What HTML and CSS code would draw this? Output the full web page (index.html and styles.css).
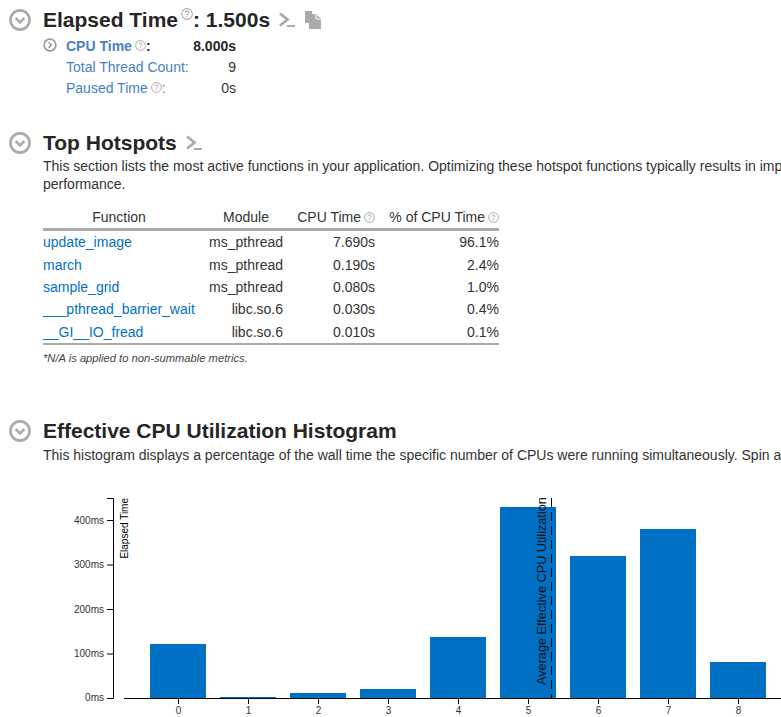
FILE: index.html
```html
<!DOCTYPE html>
<html lang="en">
<head>
  <meta charset="UTF-8" />
  <title>Summary</title>
  <link rel="stylesheet" href="styles.css">
</head>
<body>
  <svg class="defs" width="0" height="0">
    <symbol id="chevron-circle" viewBox="0 0 22 22">
      <circle cx="11" cy="11" r="9.6" fill="none" stroke="#aaa" stroke-width="2.6"/>
      <path d="M6.6 9 L11 13.4 L15.4 9" fill="none" stroke="#aaa" stroke-width="2.6"/>
    </symbol>
    <symbol id="chevron-right" viewBox="0 0 14 14">
      <circle cx="7" cy="7" r="5.9" fill="none" stroke="#999" stroke-width="1.6"/>
      <path d="M5.6 4.2 L8.4 7 L5.6 9.8" fill="none" stroke="#999" stroke-width="1.6"/>
    </symbol>
    <symbol id="terminal" viewBox="0 0 16 16">
      <path d="M1 1.5 L8.5 7.5 L1 13.5" fill="none" stroke="#aaa" stroke-width="2.8"/>
      <rect x="8" y="13" width="8" height="2" fill="#aaa"/>
    </symbol>
    <symbol id="copy" viewBox="0 0 17 18">
      <path d="M0 0 H7 V12 H0 Z M4 3 H11 L16 8 V18 H4 Z" fill="#aaa"/>
      <path d="M11 3 V8 H16" fill="none" stroke="#fff" stroke-width="1"/>
    </symbol>
    <symbol id="help" viewBox="0 0 11 11">
      <circle cx="5.5" cy="5.5" r="4.9" fill="none" stroke="#aaa" stroke-width="1"/>
      <path d="M3.9 4.3 C3.9 2.4 7.1 2.4 7.1 4.2 C7.1 5.3 5.5 5.3 5.5 6.6" fill="none" stroke="#aaa" stroke-width="1"/>
      <rect x="5" y="7.4" width="1" height="1" fill="#aaa"/>
    </symbol>
  </svg>

  <section class="section section-elapsed">
    <h2 class="title">
      <svg class="toggle"><use href="#chevron-circle"/></svg>
      <span>Elapsed Time</span><svg class="help help-raised"><use href="#help"/></svg><span>: 1.500s</span>
      <svg class="cmd"><use href="#terminal"/></svg>
      <svg class="copy"><use href="#copy"/></svg>
    </h2>
    <div class="metrics">
      <div class="metric metric-main">
        <svg class="sub-toggle"><use href="#chevron-right"/></svg>
        <span class="metric-name"><b class="link">CPU Time</b><svg class="help"><use href="#help"/></svg><b>:</b></span>
        <b class="metric-value">8.000s</b>
      </div>
      <div class="metric">
        <span class="metric-name link">Total Thread Count:</span>
        <span class="metric-value">9</span>
      </div>
      <div class="metric">
        <span class="metric-name"><span class="link">Paused Time</span><svg class="help"><use href="#help"/></svg><span class="link">:</span></span>
        <span class="metric-value">0s</span>
      </div>
    </div>
  </section>

  <section class="section section-hotspots">
    <h2 class="title">
      <svg class="toggle"><use href="#chevron-circle"/></svg>
      <span>Top Hotspots</span>
      <svg class="cmd"><use href="#terminal"/></svg>
    </h2>
    <p class="desc">This section lists the most active functions in your application. Optimizing these hotspot functions typically results in improving overall application performance.</p>
    <table class="hotspots">
      <thead>
        <tr>
          <th class="col-fn">Function</th>
          <th class="col-mod">Module</th>
          <th class="col-time">CPU Time<svg class="help"><use href="#help"/></svg></th>
          <th class="col-pct">% of CPU Time<svg class="help"><use href="#help"/></svg></th>
        </tr>
      </thead>
      <tbody>
        <tr><td><a class="fn">update_image</a></td><td>ms_pthread</td><td>7.690s</td><td>96.1%</td></tr>
        <tr><td><a class="fn">march</a></td><td>ms_pthread</td><td>0.190s</td><td>2.4%</td></tr>
        <tr><td><a class="fn">sample_grid</a></td><td>ms_pthread</td><td>0.080s</td><td>1.0%</td></tr>
        <tr><td><a class="fn">___pthread_barrier_wait</a></td><td>libc.so.6</td><td>0.030s</td><td>0.4%</td></tr>
        <tr><td><a class="fn">__GI__IO_fread</a></td><td>libc.so.6</td><td>0.010s</td><td>0.1%</td></tr>
      </tbody>
    </table>
    <p class="note">*N/A is applied to non-summable metrics.</p>
  </section>

  <section class="section section-histogram">
    <h2 class="title">
      <svg class="toggle"><use href="#chevron-circle"/></svg>
      <span>Effective CPU Utilization Histogram</span>
    </h2>
    <p class="desc">This histogram displays a percentage of the wall time the specific number of CPUs were running simultaneously. Spin and Overhead time adds to the Idle CPU utilization value.</p>

    <!-- chart origin is page x=0, y=490 -->
    <svg class="chart" width="781" height="227" viewBox="0 490 781 227">
      <g fill="#0070c5">
        <rect x="150" y="644" width="56" height="54"/>
        <rect x="220" y="697" width="56" height="1"/>
        <rect x="290" y="693" width="56" height="5"/>
        <rect x="360" y="689" width="56" height="9"/>
        <rect x="430" y="637" width="56" height="61"/>
        <rect x="500" y="507" width="56" height="191"/>
        <rect x="570" y="556" width="56" height="142"/>
        <rect x="640" y="529" width="56" height="169"/>
        <rect x="710" y="662" width="56" height="36"/>
      </g>

      <path class="axis" d="M107 498.5 H113.5 V698.5 H107 M107 520.5 H113 M107 565 H113 M107 609.5 H113 M107 654 H113"/>
      <path class="axis" d="M124 698.5 H781 M178.5 698 V704 M248.5 698 V704 M318.5 698 V704 M388.5 698 V704 M458.5 698 V704 M528.5 698 V704 M598.5 698 V704 M668.5 698 V704 M738.5 698 V704"/>

      <g class="tick tick-y">
        <text x="104" y="524">400ms</text>
        <text x="104" y="568">300ms</text>
        <text x="104" y="613">200ms</text>
        <text x="104" y="657">100ms</text>
        <text x="104" y="701">0ms</text>
      </g>
      <g class="tick tick-x">
        <text x="178.5" y="714">0</text>
        <text x="248.5" y="714">1</text>
        <text x="318.5" y="714">2</text>
        <text x="388.5" y="714">3</text>
        <text x="458.5" y="714">4</text>
        <text x="528.5" y="714">5</text>
        <text x="598.5" y="714">6</text>
        <text x="668.5" y="714">7</text>
        <text x="738.5" y="714">8</text>
      </g>

      <text class="y-title" transform="translate(127.5 498) rotate(-90)" text-anchor="end">Elapsed Time</text>
      <path class="avg-line" d="M551.5 498 V698"/>
      <text class="avg-title" transform="translate(545.5 685) rotate(-90)">Average Effective CPU Utilization</text>
    </svg>
  </section>
</body>
</html>
```

FILE: styles.css
```css
html, body {
  margin: 0;
  height: 717px;
  overflow: hidden;
}
body {
  font-family: "Liberation Sans", Arial, sans-serif;
  font-size: 14px;
  color: #333;
  background: white;
  width: 781px;
}
.defs {
  display: block;
  height: 0;
}
.section {
  white-space: nowrap;
}
.section-elapsed {
  padding-top: 8px;
  height: 90px;
}
.section-hotspots {
  padding-top: 33px;
  height: 259px;
}
.section-histogram {
  padding-top: 29px;
}
.title {
  display: flex;
  align-items: center;
  margin: 0 0 0 9px;
  height: 24px;
  font-size: 21px;
  font-weight: bold;
  color: #262626;
}
.toggle {
  width: 22px;
  height: 22px;
  margin-right: 12px;
  flex: none;
}
.help {
  width: 11px;
  height: 11px;
  flex: none;
  margin-left: 3px;
}
.help-raised {
  margin: -12px 0 0 3px;
  width: 12px;
  height: 12px;
}
.cmd {
  width: 16px;
  height: 16px;
  margin-left: 9px;
}
.copy {
  width: 17px;
  height: 18px;
  margin-left: 10px;
}
.metrics {
  margin: 3px 0 0 43px;
}
.metric {
  display: flex;
  align-items: center;
  height: 21px;
  padding-left: 23px;
  position: relative;
}
.sub-toggle {
  position: absolute;
  left: 0;
  top: 3px;
  width: 14px;
  height: 14px;
}
.metric-name {
  width: 122px;
  display: flex;
  align-items: center;
}
.metric-value {
  width: 48px;
  text-align: right;
}
.metric-main b {
  color: #262626;
}
.metric .link, .metric-main b.link {
  color: #4a80c4;
}
.desc {
  margin: 2px 0 0 43px;
  line-height: 18px;
  width: 950px;
  white-space: normal;
  color: #333;
}
.section-histogram .desc {
  margin-top: 3px;
  white-space: nowrap;
}
.hotspots {
  border-collapse: collapse;
  margin: 12px 0 0 43px;
  width: 456px;
  table-layout: fixed;
}
.hotspots th {
  font-weight: normal;
  height: 23px;
  padding: 0;
  text-align: right;
  border-bottom: 3px solid #aaa;
}
.hotspots th.col-fn {
  width: 152px;
  text-align: center;
}
.hotspots th.col-mod {
  width: 74px;
  padding-right: 14px;
}
.col-time { width: 92px; }
.hotspots th .help {
  margin-left: 3px;
  vertical-align: -1px;
}
.hotspots td {
  padding: 0;
  height: 22.4px;
  text-align: right;
}
.hotspots td:first-child {
  text-align: left;
}
.hotspots tbody tr:last-child td {
  border-bottom: 2px solid #aaa;
}
.fn {
  color: #0071c5;
}
.note {
  margin: 7px 0 0 43px;
  font-size: 11.2px;
  font-style: italic;
  color: #444;
}
.chart {
  display: block;
  margin-top: 26px;
}
.axis {
  fill: none;
  stroke: #000;
  stroke-width: 1;
}
.tick text {
  font-size: 10px;
  fill: #333;
}
.tick-y text {
  text-anchor: end;
}
.tick-x text {
  text-anchor: middle;
}
.y-title {
  font-size: 10px;
  fill: #000;
}
.avg-line {
  stroke: #000;
  stroke-width: 1;
  stroke-dasharray: 9 5;
  fill: none;
}
.avg-title {
  font-size: 12.7px;
  fill: #111;
}
```
